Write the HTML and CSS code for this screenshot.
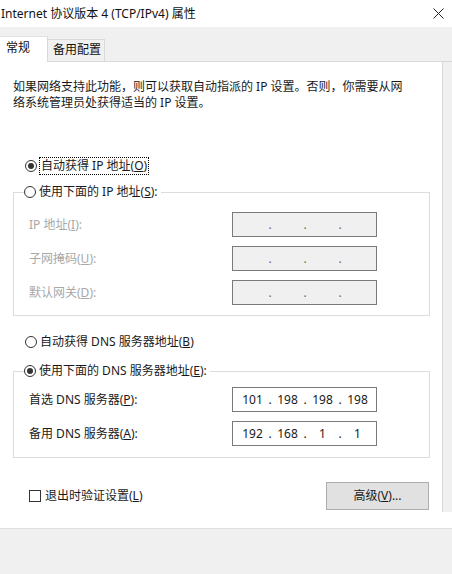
FILE: index.html
```html
<!DOCTYPE html>
<html lang="zh-CN">
<head>
<meta charset="utf-8">
<title>Internet 协议版本 4 (TCP/IPv4) 属性</title>
<link rel="stylesheet" href="styles.css">
</head>
<body>
<div class="window">
  <div class="titlebar">
    <span class="title">Internet 协议版本 4 (TCP/IPv4) 属性</span>
    <svg class="close" viewBox="0 0 11 11" width="11" height="11"><path d="M0.5 0.5 L10.5 10.5 M10.5 0.5 L0.5 10.5" stroke="#222" stroke-width="1" fill="none"/></svg>
  </div>
  <div class="tabs">
    <div class="tab active">常规</div>
    <div class="tab inactive">备用配置</div>
    <div class="tab-fill"></div>
  </div>
  <div class="main">
    <div class="panel">
      <p class="desc">如果网络支持此功能，则可以获取自动指派的 IP 设置。否则，你需要从网<br>络系统管理员处获得适当的 IP 设置。</p>

      <div class="radio-row first">
        <span class="radio checked"></span>
        <span class="rtext focus">自动获得 IP 地址(<u>O</u>)</span>
      </div>

      <fieldset class="group ipgroup">
        <legend class="legend">
          <span class="radio"></span>
          <span class="rtext">使用下面的 IP 地址(<u>S</u>):</span>
        </legend>
        <div class="field">
          <span class="label disabled">IP 地址(<u>I</u>):</span>
          <div class="ipbox off"><span class="seg"></span><span class="dot">.</span><span class="seg"></span><span class="dot">.</span><span class="seg"></span><span class="dot">.</span><span class="seg"></span></div>
        </div>
        <div class="field">
          <span class="label disabled">子网掩码(<u>U</u>):</span>
          <div class="ipbox off"><span class="seg"></span><span class="dot">.</span><span class="seg"></span><span class="dot">.</span><span class="seg"></span><span class="dot">.</span><span class="seg"></span></div>
        </div>
        <div class="field">
          <span class="label disabled">默认网关(<u>D</u>):</span>
          <div class="ipbox off"><span class="seg"></span><span class="dot">.</span><span class="seg"></span><span class="dot">.</span><span class="seg"></span><span class="dot">.</span><span class="seg"></span></div>
        </div>
      </fieldset>

      <div class="radio-row dnsauto">
        <span class="radio"></span>
        <span class="rtext">自动获得 DNS 服务器地址(<u>B</u>)</span>
      </div>

      <fieldset class="group dnsgroup">
        <legend class="legend">
          <span class="radio checked"></span>
          <span class="rtext">使用下面的 DNS 服务器地址(<u>E</u>):</span>
        </legend>
        <div class="field">
          <span class="label">首选 DNS 服务器(<u>P</u>):</span>
          <div class="ipbox"><span class="seg">101</span><span class="dot">.</span><span class="seg">198</span><span class="dot">.</span><span class="seg">198</span><span class="dot">.</span><span class="seg">198</span></div>
        </div>
        <div class="field">
          <span class="label">备用 DNS 服务器(<u>A</u>):</span>
          <div class="ipbox"><span class="seg">192</span><span class="dot">.</span><span class="seg">168</span><span class="dot">.</span><span class="seg">1</span><span class="dot">.</span><span class="seg">1</span></div>
        </div>
      </fieldset>

      <div class="footer-row">
        <div class="check-wrap">
          <span class="checkbox"></span>
          <span class="ctext">退出时验证设置(<u>L</u>)</span>
        </div>
        <div class="button">高级(<u>V</u>)...</div>
      </div>
    </div>
    <div class="strip"></div>
  </div>
  <div class="gap"></div>
  <div class="bottom"></div>
</div>
</body>
</html>
```

FILE: styles.css
```css
html, body {
  margin: 0;
  padding: 0;
}

body {
  width: 452px;
  height: 574px;
  overflow: hidden;
  background: #f0f0f0;
  font-family: "Noto Sans", "Noto Sans CJK SC", sans-serif;
  font-size: 12px;
  color: #1a1a1a;
}

.window {
  width: 452px;
  height: 574px;
  display: flex;
  flex-direction: column;
}

.titlebar {
  height: 27px;
  flex: none;
  background: #fff;
  display: flex;
  align-items: center;
  justify-content: space-between;
  padding: 0 8px 0 1px;
  box-sizing: border-box;
}

.title {
  line-height: 16px;
  color: #111;
  white-space: nowrap;
}

.close {
  display: block;
}

.tabs {
  height: 35px;
  flex: none;
  display: flex;
  align-items: flex-end;
}

.tab {
  box-sizing: border-box;
  line-height: 16px;
  white-space: nowrap;
  color: #111;
}

.tab.active {
  width: 48px;
  height: 26px;
  background: #fff;
  border-top: 1px solid #e3e3e3;
  border-right: 1px solid #d9d9d9;
  padding: 3px 0 0 6px;
}

.tab.inactive {
  width: 57px;
  height: 23px;
  background: #f0f0f0;
  border-top: 1px solid #d9d9d9;
  border-right: 1px solid #d9d9d9;
  border-bottom: 1px solid #d9d9d9;
  padding: 2px 0 0 5px;
}

.tab-fill {
  flex: 1;
  border-bottom: 1px solid #d9d9d9;
}

.main {
  height: 450px;
  flex: none;
  display: flex;
}

.panel {
  width: 443px;
  box-sizing: border-box;
  background: #fff;
  border-right: 1px solid #dadada;
  padding-left: 13px;
}

.strip {
  flex: 1;
  background: #f0f0f0;
}

.desc {
  margin: 17px 0 0;
  line-height: 16px;
  white-space: nowrap;
  color: #1a1a1a;
}

.radio-row {
  display: flex;
  align-items: center;
  height: 16px;
  margin-left: 12px;
}

.radio-row.first {
  margin-top: 47px;
}

.radio-row.dnsauto {
  margin-top: 18px;
}

.radio {
  width: 12px;
  height: 12px;
  box-sizing: border-box;
  border: 1px solid #333;
  border-radius: 50%;
  display: flex;
  align-items: center;
  justify-content: center;
  flex: none;
  background: #fff;
}

.radio.checked::after {
  content: "";
  width: 6px;
  height: 6px;
  border-radius: 50%;
  background: #333;
}

.rtext {
  margin-left: 3px;
  line-height: 16px;
  white-space: nowrap;
}

.rtext.focus {
  outline: 1px dotted #000;
  padding: 0 1px;
}

.group {
  width: 417px;
  box-sizing: border-box;
  margin: 0;
  border: 1px solid #dcdcdc;
  min-width: 0;
}

.ipgroup {
  margin-top: 9px;
  padding: 11px 0 10px 0;
}

.dnsgroup {
  margin-top: 12px;
  padding: 7px 0 11px 0;
}

.legend {
  display: flex;
  align-items: center;
  height: 18px;
  padding: 0 3px 0 0;
  margin-left: 10px;
  background: #fff;
}

.field {
  display: flex;
  align-items: center;
  height: 25px;
  padding-left: 15px;
}

.field + .field {
  margin-top: 9px;
}

.label {
  width: 203px;
  line-height: 16px;
  white-space: nowrap;
}

.label.disabled {
  color: #a8a8a8;
}

.ipbox {
  width: 145px;
  height: 25px;
  box-sizing: border-box;
  border: 1px solid #7a7a7a;
  background: #fff;
  display: flex;
  align-items: center;
  padding-left: 5px;
  line-height: 16px;
  color: #1a1a1a;
}

.ipbox.off {
  background: #f0f0f0;
  color: #6a6a6a;
}

.seg {
  width: 29px;
  text-align: center;
}

.dot {
  width: 6px;
  text-align: center;
}

.footer-row {
  margin-top: 24px;
  width: 416px;
  display: flex;
  align-items: center;
  justify-content: space-between;
}

.check-wrap {
  display: flex;
  align-items: center;
  margin-left: 16px;
}

.checkbox {
  width: 12px;
  height: 12px;
  box-sizing: border-box;
  border: 1px solid #333;
  background: #fff;
}

.ctext {
  margin-left: 4px;
  line-height: 16px;
  white-space: nowrap;
}

.button {
  width: 103px;
  height: 28px;
  box-sizing: border-box;
  background: #e1e1e1;
  border: 1px solid #adadad;
  display: flex;
  align-items: center;
  justify-content: center;
  line-height: 16px;
}

.gap {
  height: 16px;
  flex: none;
  background: #fff;
}

.bottom {
  flex: 1;
  border-top: 1px solid #dfdfdf;
  background: #f0f0f0;
}
```
